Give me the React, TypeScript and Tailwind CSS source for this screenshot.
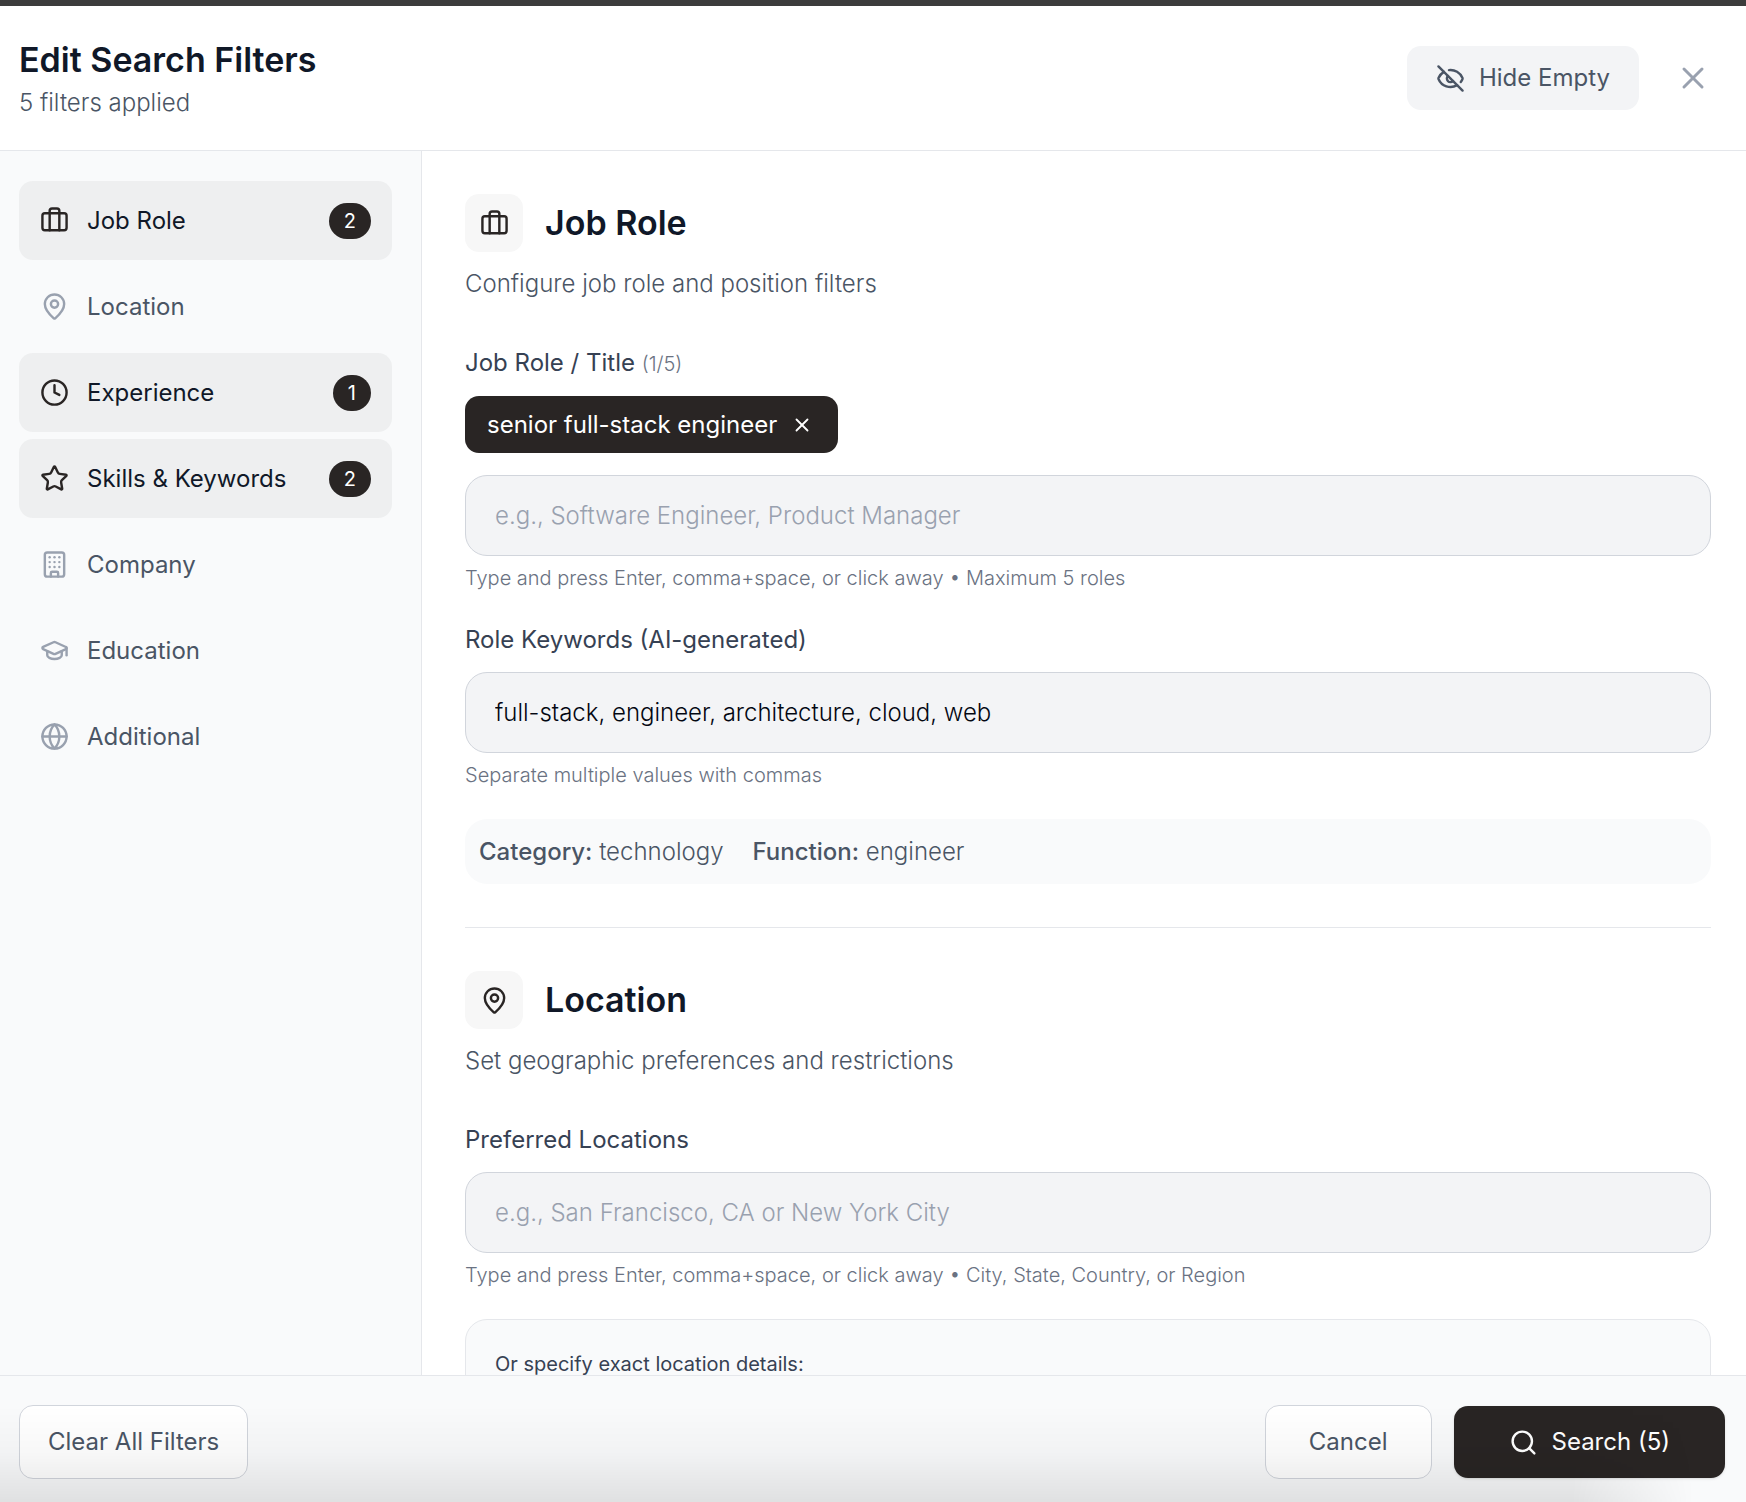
import React from "react";
import {
  Briefcase,
  Building,
  Clock,
  EyeOff,
  Globe,
  GraduationCap,
  MapPin,
  Search,
  Star,
  X,
  type LucideIcon,
} from "lucide-react";

type NavItem = {
  label: string;
  icon: LucideIcon;
  count?: number;
};

const navItems: NavItem[] = [
  { label: "Job Role", icon: Briefcase, count: 2 },
  { label: "Location", icon: MapPin },
  { label: "Experience", icon: Clock, count: 1 },
  { label: "Skills & Keywords", icon: Star, count: 2 },
  { label: "Company", icon: Building },
  { label: "Education", icon: GraduationCap },
  { label: "Additional", icon: Globe },
];

function NavButton({ label, icon: Icon, count }: NavItem) {
  const active = count !== undefined;
  return (
    <button
      type="button"
      className={
        active
          ? "flex h-[79px] w-full items-center rounded-[14px] bg-[#eeeff0] px-[21px] text-gray-900"
          : "flex h-[79px] w-full items-center rounded-[14px] px-[21px] text-gray-600"
      }
    >
      <Icon className={active ? "size-[29px] shrink-0 text-[#292524]" : "size-[29px] shrink-0 text-gray-400"} />
      <span className="ml-[18px] flex-1 text-left text-[24px]">{label}</span>
      {active && (
        <span className="flex h-9 items-center rounded-full bg-[#292524] px-[15px] text-[20px] text-white">
          {count}
        </span>
      )}
    </button>
  );
}

function SectionHeading({ icon: Icon, title, text }: { icon: LucideIcon; title: string; text: string }) {
  return (
    <>
      <div className="flex items-center gap-[22px]">
        <div className="flex size-[58px] items-center justify-center rounded-[14px] bg-[#f7f7f7]">
          <Icon className="size-[29px] text-[#292524]" />
        </div>
        <h2 className="text-[34px] leading-[50px] font-semibold text-gray-900">{title}</h2>
      </div>
      <p className="mt-[14px] text-[24px] leading-9 font-light text-gray-600">{text}</p>
    </>
  );
}

type FieldProps = {
  id: string;
  placeholder?: string;
  defaultValue?: string;
  hint: string;
};

function TextField({ id, placeholder, defaultValue, hint }: FieldProps) {
  return (
    <>
      <input
        id={id}
        type="text"
        placeholder={placeholder}
        defaultValue={defaultValue}
        className="block h-[81px] w-full rounded-[22px] border border-gray-300 bg-gray-100 px-[29px] text-[24px] font-light text-gray-950 placeholder:text-gray-400"
      />
      <p className="mt-[7px] text-[20px] leading-[30px] font-light text-gray-500">{hint}</p>
    </>
  );
}

export default function App() {
  return (
    <div className="flex h-screen flex-col overflow-hidden border-t-[6px] border-[#3c3c3c] bg-white font-['Inter',sans-serif]">
      <header className="flex h-[145px] shrink-0 items-center justify-between border-b border-gray-200 pr-[35px] pl-[19px]">
        <div>
          <h1 className="text-[34px] leading-[50px] font-semibold text-gray-900">Edit Search Filters</h1>
          <p className="text-[24px] leading-9 font-light text-gray-600">5 filters applied</p>
        </div>
        <div className="flex items-center gap-9">
          <button type="button" className="flex h-16 items-center gap-[14px] rounded-[14px] bg-gray-100 px-[29px] text-[24px] text-gray-600">
            <EyeOff className="size-[29px]" />
            Hide Empty
          </button>
          <button type="button" aria-label="Close" className="text-gray-400">
            <X className="size-9" />
          </button>
        </div>
      </header>

      <div className="flex min-h-0 flex-1">
        <nav aria-label="Filter sections" className="flex w-[422px] shrink-0 flex-col gap-[7px] border-r border-gray-200 bg-gray-50 pt-[30px] pr-[29px] pl-[19px]">
          {navItems.map((item) => (
            <NavButton key={item.label} {...item} />
          ))}
        </nav>

        <main className="min-w-0 flex-1 overflow-hidden pt-[43px] pr-[35px] pl-[43px]">
          <section>
            <SectionHeading icon={Briefcase} title="Job Role" text="Configure job role and position filters" />
            <label htmlFor="job-title" className="mt-[43px] block text-[24px] leading-9 text-gray-700">
              Job Role / Title <span className="text-[20px] font-light text-gray-500">(1/5)</span>
            </label>
            <div className="mt-[14px] mb-[22px] flex">
              <span className="flex h-[57px] items-center gap-[11px] rounded-[14px] bg-[#292524] px-[22px] text-[24px] text-white">
                senior full-stack engineer
                <button type="button" aria-label="Remove senior full-stack engineer" className="p-[3px]">
                  <X className="size-[22px]" />
                </button>
              </span>
            </div>
            <TextField
              id="job-title"
              placeholder="e.g., Software Engineer, Product Manager"
              hint="Type and press Enter, comma+space, or click away • Maximum 5 roles"
            />
            <label htmlFor="role-keywords" className="mt-[29px] mb-[14px] block text-[24px] leading-9 text-gray-700">
              Role Keywords (AI-generated)
            </label>
            <TextField
              id="role-keywords"
              defaultValue="full-stack, engineer, architecture, cloud, web"
              hint="Separate multiple values with commas"
            />
            <div className="mt-[29px] flex h-[65px] items-center gap-[29px] rounded-[22px] bg-gray-50 px-[14px] text-[24px] font-light text-gray-600">
              <span>
                <strong className="font-medium">Category:</strong> technology
              </span>
              <span>
                <strong className="font-medium">Function:</strong> engineer
              </span>
            </div>
          </section>

          <section className="mt-[43px] border-t border-gray-200 pt-[43px]">
            <SectionHeading icon={MapPin} title="Location" text="Set geographic preferences and restrictions" />
            <label htmlFor="locations" className="mt-[43px] mb-[14px] block text-[24px] leading-9 text-gray-700">
              Preferred Locations
            </label>
            <TextField
              id="locations"
              placeholder="e.g., San Francisco, CA or New York City"
              hint="Type and press Enter, comma+space, or click away • City, State, Country, or Region"
            />
            <div className="mt-[29px] rounded-[22px] border border-gray-200 bg-gray-50 p-[29px]">
              <p className="text-[20px] leading-[30px] text-gray-700">Or specify exact location details:</p>
            </div>
          </section>
        </main>
      </div>

      <footer className="relative flex h-[127px] shrink-0 items-start justify-between border-t border-gray-200 bg-gray-50 pt-[29px] pr-[21px] pl-[19px] text-[24px]">
        <button type="button" className="h-[74px] rounded-[14px] border border-gray-300 bg-white px-[28px] text-gray-600">
          Clear All Filters
        </button>
        <div className="flex items-center gap-[22px]">
          <button type="button" className="h-[74px] rounded-[14px] border border-gray-300 bg-white px-[43px] text-gray-600">
            Cancel
          </button>
          <button type="button" className="flex h-[72px] items-center gap-[14px] rounded-[14px] bg-[#292524] px-[55px] text-white shadow-sm">
            <Search className="size-[29px]" />
            Search (5)
          </button>
        </div>
        <div className="pointer-events-none absolute inset-x-0 bottom-0 h-24 bg-linear-to-t from-black/10 via-black/3 to-transparent mask-r-from-90% mask-r-to-97%" />
      </footer>
    </div>
  );
}
